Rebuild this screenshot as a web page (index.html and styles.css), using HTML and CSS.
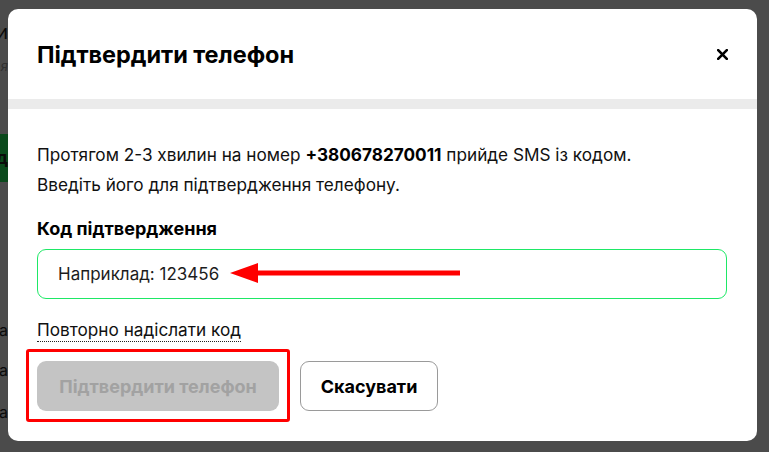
FILE: index.html
```html
<!DOCTYPE html>
<html lang="uk">
<head>
<meta charset="utf-8">
<title>Підтвердити телефон</title>
<link rel="stylesheet" href="styles.css">
</head>
<body>
<div class="page">
  <div class="strip">
    <div class="row r-title"><span>Ми</span></div>
    <div class="row r-sub"><span>я</span></div>
    <div class="row r-btn"><span>Вхід</span></div>
    <div class="row r-a1"><span>Назва</span></div>
    <div class="row r-a2"><span>Сума</span></div>
    <div class="row r-a3"><span>Дата</span></div>
  </div>
</div>

<div class="modal">
  <div class="modal-head">
    <h2 class="modal-title">Підтвердити телефон</h2>
    <button class="close" aria-label="Закрити">
      <svg width="11" height="11" viewBox="0 0 11 11"><path d="M1.2 1.2 L9.8 9.8 M9.8 1.2 L1.2 9.8" stroke="#000" stroke-width="2.6" stroke-linecap="square" fill="none"/></svg>
    </button>
  </div>
  <div class="band"></div>
  <div class="modal-body">
    <p class="info">Протягом 2-3 хвилин на номер <b>+380678270011</b> прийде SMS із кодом.<br>Введіть його для підтвердження телефону.</p>
    <label class="label" for="code">Код підтвердження</label>
    <div class="field">
      <input id="code" class="input" type="text" placeholder="Наприклад: 123456">
      <svg class="arrow" width="232" height="22" viewBox="0 0 232 22"><path d="M0 11 L28 1 L28 8.5 L230 8.5 L230 13.5 L28 13.5 L28 21 Z" fill="#ff0000"/></svg>
    </div>
    <a class="resend" href="#">Повторно надіслати код</a>
    <div class="actions">
      <div class="confirm-wrap">
        <button class="btn btn-disabled" disabled>Підтвердити телефон</button>
        <span class="highlight"></span>
      </div>
      <button class="btn btn-outline">Скасувати</button>
    </div>
  </div>
</div>
</body>
</html>
```

FILE: styles.css
```css
* { box-sizing: border-box; }
html, body { margin: 0; padding: 0; }
body {
  width: 769px;
  height: 452px;
  overflow: hidden;
  background: #4b4b4b;
  font-family: Inter, "Noto Sans", sans-serif;
  color: #000;
  position: relative;
}

.page { height: 452px; }
.strip {
  width: 8px;
  overflow: hidden;
  display: flex;
  flex-direction: column;
}
.row {
  display: flex;
  justify-content: flex-end;
  white-space: nowrap;
  color: #0a0a0a;
}
.r-title { height: 22px; margin-top: 21px; font-size: 20px; line-height: 22px; }
.r-sub { height: 14px; margin-top: 16px; font-size: 13px; line-height: 14px; color: #303030; font-style: italic; }
.r-btn { height: 48px; margin-top: 61px; background: #0b4a1c; font-size: 18px; font-weight: 700; line-height: 48px; }
.r-a1, .r-a2, .r-a3 { font-size: 16px; line-height: 18px; height: 18px; }
.r-a1 { margin-top: 139px; }
.r-a2 { margin-top: 22px; }
.r-a3 { margin-top: 24px; }

.modal {
  position: absolute;
  left: 8px;
  top: 9px;
  width: 749px;
  height: 432px;
  background: #fff;
  border-radius: 10px;
  overflow: hidden;
}
.modal-head {
  height: 90px;
  display: flex;
  align-items: center;
  justify-content: space-between;
  padding: 0 29px 0 29px;
}
.modal-title {
  margin: 0;
  font-size: 23.5px;
  font-weight: 700;
  line-height: 30px;
  letter-spacing: -0.05px;
  padding-top: 1px;
}
.close {
  border: 0;
  background: none;
  padding: 0;
  width: 11px;
  height: 11px;
  display: flex;
  cursor: pointer;
  margin-right: 0;
  margin-top: 1px;
}
.band { height: 10px; background: #ebebeb; }

.modal-body {
  padding: 31px 30px 0 29px;
  display: flex;
  flex-direction: column;
  align-items: flex-start;
}
.info {
  margin: 0;
  font-size: 17.2px;
  line-height: 30px;
  color: #111;
}
.info b { font-weight: 700; color: #000; }

.label {
  margin-top: 17px;
  font-size: 18px;
  font-weight: 700;
  line-height: 24px;
}
.field {
  position: relative;
  margin-top: 8px;
  width: 690px;
}
.input {
  display: block;
  width: 100%;
  height: 50px;
  border: 1px solid #1ee866;
  border-radius: 9px;
  padding: 0 20px;
  font-family: inherit;
  font-size: 17px;
  color: #222;
  outline: none;
}
.input::placeholder { color: #1c1c1c; opacity: 1; }
.arrow {
  position: absolute;
  left: 193px;
  top: 13px;
}

.resend {
  margin-top: 20px;
  font-size: 17.2px;
  line-height: 22px;
  color: #111;
  text-decoration: none;
  border-bottom: 1px dotted #222;
}

.actions {
  margin-top: 19px;
  display: flex;
  gap: 21px;
}
.confirm-wrap { position: relative; display: flex; }
.btn {
  height: 50px;
  border-radius: 9px;
  font-family: inherit;
  font-size: 18px;
  font-weight: 700;
  padding: 0;
}
.btn-disabled {
  width: 242px;
  border: 0;
  background: #c4c4c4;
  color: #a2a2a2;
}
.btn-outline {
  width: 138px;
  background: #fff;
  border: 1px solid #9a9a9a;
  color: #000;
  cursor: pointer;
}
.highlight {
  position: absolute;
  left: -11px;
  top: -12px;
  width: 264px;
  height: 73px;
  border: 3px solid #ff0000;
  border-radius: 3px;
  pointer-events: none;
}
```
